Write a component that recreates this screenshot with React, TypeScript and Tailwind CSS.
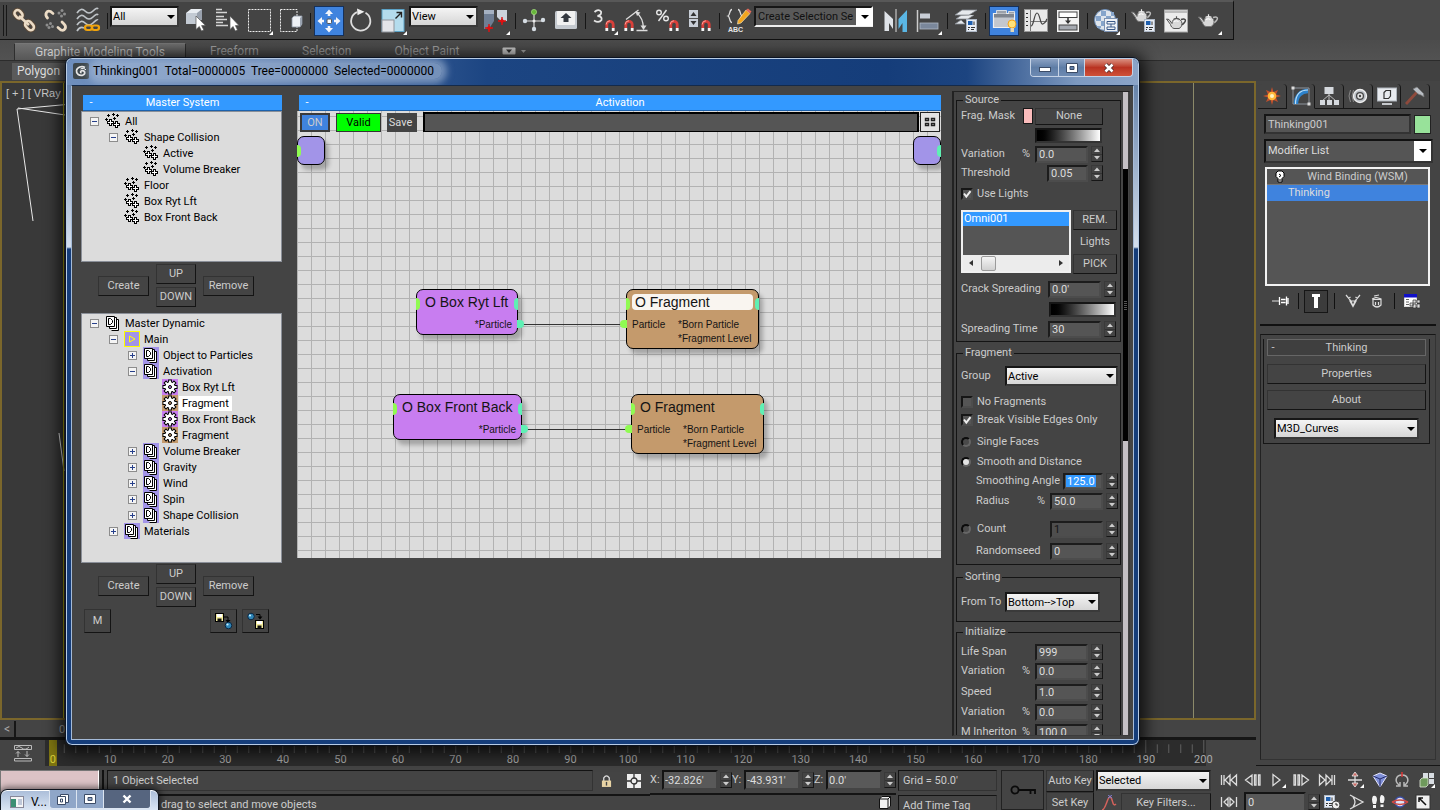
import { useId } from "react";
import type { ReactNode } from "react";

/* ---------- shared controls ---------- */

const fieldBase =
  "h-[17px] min-w-0 border-2 border-t-[#1c1c1c] border-l-[#1c1c1c] border-r-[#4c4c4c] border-b-[#4c4c4c] pl-[2px] text-[11px] leading-none outline-none";

function Spinner() {
  return (
    <span className="flex h-[16px] w-[12px] shrink-0 flex-col border border-[#3a3a3a] border-r-[#161616] border-b-[#161616]">
      <button type="button" aria-label="Increase" className="flex flex-1 items-center justify-center">
        <svg viewBox="0 0 6 4" className="h-[4px] w-[6px]"><path d="M0 4L3 0.5L6 4Z" fill="#ccc" /></svg>
      </button>
      <button type="button" aria-label="Decrease" className="flex flex-1 items-center justify-center border-t border-[#333]">
        <svg viewBox="0 0 6 4" className="h-[4px] w-[6px]"><path d="M0 0L3 3.5L6 0Z" fill="#ccc" /></svg>
      </button>
    </span>
  );
}

function NumberRow({
  label, unit, value, height, width = "w-[53px]", pad = "pr-[17px]", indent = "", tone = "bg-[#555] text-[#ddd]",
}: {
  label: string; unit?: string; value: string; height: string; width?: string; pad?: string; indent?: string; tone?: string;
}) {
  const id = useId();
  return (
    <div className={`flex shrink-0 items-center gap-[3px] ${height} ${pad} ${indent}`}>
      <label htmlFor={id} className="mr-auto whitespace-nowrap">{label}</label>
      {unit && <span className="mr-[2px]">{unit}</span>}
      <input id={id} defaultValue={value} className={`${fieldBase} ${width} ${tone}`} />
      <Spinner />
    </div>
  );
}

function Check({ label, checked, height }: { label: string; checked?: boolean; height: string }) {
  return (
    <label className={`flex items-center gap-[4px] ${height}`}>
      <span className="relative h-[12px] w-[12px] shrink-0">
        <input
          type="checkbox"
          defaultChecked={checked}
          className="peer block h-[12px] w-[12px] appearance-none border-2 border-t-[#161616] border-l-[#161616] border-r-[#4d4d4d] border-b-[#4d4d4d] bg-[#555]"
        />
        <svg viewBox="0 0 12 12" className="pointer-events-none absolute inset-0 hidden peer-checked:block">
          <path d="M3 5.5L5.3 8.5L9.5 3.2" stroke="#eee" strokeWidth="2" fill="none" />
        </svg>
      </span>
      <span className="whitespace-nowrap">{label}</span>
    </label>
  );
}

function Radio({ label, checked }: { label: string; checked?: boolean }) {
  return (
    <label className="flex items-center gap-[6px]">
      <input
        type="radio"
        name="split-mode"
        defaultChecked={checked}
        className="block h-[10px] w-[10px] shrink-0 appearance-none rounded-full border-2 border-t-[#0c0c0c] border-l-[#0c0c0c] border-r-[#666] border-b-[#666] bg-[#4a4a4a] checked:bg-[#e4e4e4]"
      />
      <span className="whitespace-nowrap">{label}</span>
    </label>
  );
}

function Group({ title, className, children }: { title: string; className?: string; children: ReactNode }) {
  return (
    <fieldset className={`min-w-0 shrink-0 border border-[#141414] pl-[4px] ${className ?? ""}`}>
      <legend className="ml-[2px] h-[12px] px-[2px] leading-[12px]">{title}</legend>
      <div className="flex flex-col">{children}</div>
    </fieldset>
  );
}

function Combo({ label, value, className, tone = "bg-gradient-to-b from-[#f4f4f4] to-[#d6d6d6] text-black" }: {
  label: string; value: string; className: string; tone?: string;
}) {
  return (
    <span className={`relative block shrink-0 ${className}`}>
      <select
        aria-label={label}
        className={`block h-full w-full appearance-none border-2 border-t-[#161616] border-l-[#161616] border-r-[#3a3a3a] border-b-[#3a3a3a] pl-px text-[11px] leading-none outline-none ${tone}`}
      >
        <option>{value}</option>
      </select>
      <svg viewBox="0 0 8 4" className="pointer-events-none absolute top-1/2 right-[4px] -mt-[2px] h-[4px] w-[8px]">
        <path d="M0 0H8L4 4Z" fill="#000" />
      </svg>
    </span>
  );
}

function PushButton({ className, children, label }: { className: string; children: ReactNode; label?: string }) {
  return (
    <button
      type="button"
      aria-label={label}
      className={`flex shrink-0 items-center justify-center border border-t-[#333] border-l-[#333] border-r-[#141414] border-b-[#141414] bg-[#444] text-[#ccc] ${className}`}
    >
      {children}
    </button>
  );
}

/* ---------- main toolbar ---------- */

function Tool({ label, children, active, flyout }: { label: string; children: ReactNode; active?: boolean; flyout?: boolean }) {
  return (
    <button type="button" aria-label={label} className="flex h-[32px] w-[32px] shrink-0 items-center justify-center">
      <svg viewBox="0 0 32 32" className="h-[32px] w-[32px]" fill="none">
        {active && <rect x="1.5" y="1.5" width="29" height="29" fill="#3f83de" stroke="#15315c" />}
        {children}
        {flyout && <path d="M30 26V30H26Z" fill="#fff" />}
      </svg>
    </button>
  );
}

function Sep() {
  return (
    <span className="flex w-[6px] shrink-0 justify-center">
      <span className="h-[16px] w-px bg-[#161616]" />
    </span>
  );
}

function Magnet({ x, y }: { x: number; y: number }) {
  return (
    <g transform={`translate(${x} ${y})`}>
      <path d="M1.8 8V4.5A3.2 3.2 0 0 1 8.2 4.5V8" stroke="#d8403a" strokeWidth="2.8" />
      <path d="M1.2 4.5A3.8 3.8 0 0 1 5 0.800" stroke="#ffa198" strokeWidth="1" />
      <path d="M1.8 8V11M8.2 8V11" stroke="#f4f4f4" strokeWidth="2.8" />
    </g>
  );
}

function Teapot({ x = 0, y = 0, stroke = "none" }: { x?: number; y?: number; stroke?: string }) {
  return (
    <g transform={`translate(${x} ${y})`}>
      <path d="M15 4.5C19 3 20.5 5 18.5 7.5C17.5 9 16 9.8 14.5 10" stroke={stroke === "none" ? "#bbb" : "#444"} strokeWidth="1.4" />
      <path d="M0.5 4L3 4.5L6 8.5C6 5.5 8 3.5 10.5 3.5S16 5.5 16 8.5C16 11 14.5 13 13 13.5H8C6 13 5 11.5 4.5 9.5Z" fill="#d8d8d8" stroke={stroke === "none" ? "#777" : stroke} strokeWidth="1" />
      <path d="M7.5 4.2Q10.5 2.8 13.5 4.2M10.5 3V1.2" stroke={stroke === "none" ? "#eee" : stroke} strokeWidth="1.2" />
      <path d="M8 6.5Q10 5 12.5 6.5" stroke="#fff" />
    </g>
  );
}

function Dialog({ x, y }: { x: number; y: number }) {
  return (
    <g transform={`translate(${x} ${y})`}>
      <rect x="0.5" y="0.5" width="10" height="12" fill="#e8edf4" stroke="#aeb8c6" />
      <rect x="2" y="2" width="4.5" height="4" fill="#1e5fae" />
      <path d="M8 2.5V6M2 8.5H4M5 8.5H9M2 10.5H3M5 10.5H8" stroke="#333" />
    </g>
  );
}

function MainToolbar() {
  return (
    <div className="flex h-[40px] shrink-0 bg-[#4a4a4a]">
      <div role="toolbar" aria-label="Main toolbar" className="flex h-[40px] items-center border-t-2 border-r border-b border-t-[#585858] border-r-[#111] border-b-[#111] bg-[#444]">
        <span className="mr-[1px] ml-[3px] h-[31px] w-[4px] border-x border-[#181818]" />
        <Tool label="Select and link">
          <g stroke="#5b4a3a" strokeWidth="4.6"><rect x="6" y="6" width="9" height="6.4" rx="3.2" transform="rotate(48 10.5 9.2)" /><rect x="16.5" y="17.5" width="10" height="6.4" rx="3.2" transform="rotate(48 21.5 20.7)" /></g>
          <g stroke="#ecdcc6" strokeWidth="2.6"><rect x="6" y="6" width="9" height="6.4" rx="3.2" transform="rotate(48 10.5 9.2)" /><rect x="16.5" y="17.5" width="10" height="6.4" rx="3.2" transform="rotate(48 21.5 20.7)" /><path d="M11 11L21 20" /></g>
        </Tool>
        <Tool label="Unlink selection">
          <g stroke="#ecdcc6" strokeWidth="2.8" strokeLinecap="round"><path d="M7.5 13C4 9 7 5 10.5 6.5L13 8.5" /><path d="M18 22.5L21 25C25 26.5 27 22 24 19L22 17" /></g>
          <g fill="#8d8d8d"><circle cx="19" cy="8" r="1.5" /><circle cx="22" cy="5.500" r="1.500" /><circle cx="24.5" cy="9" r="1.5" /><circle cx="21.500" cy="11" r="1.500" /><circle cx="7" cy="20" r="1.5" /><circle cx="10.500" cy="18.5" r="1.500" /><circle cx="9" cy="22.5" r="1.5" /><circle cx="12.500" cy="21.500" r="1.500" /></g>
        </Tool>
        <Tool label="Bind to space warp">
          <g stroke="#bfc4c8" strokeWidth="1.7"><path d="M5 8Q9 2 13 6T21 6T26 4" /><path d="M5 14Q9 8 13 12T21 12T26 10" /><path d="M5 20Q9 14 13 18T21 18T26 15" /><path d="M5 26Q8 21 12 23" /></g>
          <g stroke="#f0a30c" strokeWidth="2.2"><rect x="13" y="20.500" width="7" height="4.500" rx="2.2" /><rect x="20" y="20.500" width="7" height="4.500" rx="2.2" /></g>
        </Tool>
        <Sep />
        <Combo label="Selection filter" value="All" className="mb-[8px] h-[21px] w-[69px]" />
        <Tool label="Select object">
          <path d="M7 8L12 4H23V14L19 19H7Z" fill="#e9edf2" /><path d="M7 8H18V19H7Z" fill="#c3cad3" /><path d="M18 8L23 4V14L18 19Z" fill="#99a1ad" />
          <path d="M17 11V24.500L20.300 21.500L22.500 26L24.800 25L22.600 20.600H26.500Z" fill="#fff" stroke="#555" strokeWidth="0.7" />
        </Tool>
        <Tool label="Select by name">
          <path d="M5 4.500H11M5 7.500H16M5 11.500H13M5 14.500H16M5 17.500H12M5 20.500H17" stroke="#d5d5d5" strokeWidth="1.3" />
          <path d="M19 11V24.500L22 21.500L24.300 26L26.500 25L24.400 20.600H28Z" fill="#fff" stroke="#555" strokeWidth="0.7" />
        </Tool>
        <Tool label="Rectangular selection region" flyout>
          <rect x="5.500" y="4.500" width="22" height="22" stroke="#eee" strokeDasharray="2 1" />
        </Tool>
        <Tool label="Window crossing">
          <path d="M5.500 4.500H22V11M5.500 4.500V26.500H22V22" stroke="#eee" strokeDasharray="2 1" />
          <path d="M17 13L19 11H27V19L25 22H17Z" fill="#eef1f5" stroke="#8c95a2" strokeWidth="0.8" /><path d="M25 13L27 11V19L25 22Z" fill="#9aa3b0" />
        </Tool>
        <Sep />
        <Tool label="Select and move" active>
          <g fill="#f2f5fb"><path d="M16 4.500L20 9H17.300V11H14.700V9H12Z" /><path d="M16 27.500L20 23H17.300V21H14.700V23H12Z" /><path d="M4.500 16L9 12V14.700H11V17.300H9V20Z" /><path d="M27.500 16L23 12V14.700H21V17.300H23V20Z" /></g>
          <rect x="14" y="14" width="4.500" height="4.500" rx="1" fill="#fff" stroke="#555" />
        </Tool>
        <Tool label="Select and rotate">
          <path d="M20.500 7.700A9.600 9.600 0 1 1 12 7.200" stroke="#ddd" strokeWidth="1.8" /><path d="M12 3.500L19.500 6.800L12.500 10.200Z" fill="#eee" />
        </Tool>
        <Tool label="Select and scale" flyout>
          <rect x="5" y="4.500" width="22" height="22" fill="#b4dced" stroke="#5ba2c6" /><rect x="5" y="15" width="12" height="12" fill="#e3e5ea" stroke="#8f949c" />
          <path d="M18.500 13.500L24 8M19.500 7.500H24.500V12.500" stroke="#222" strokeWidth="1.4" />
        </Tool>
        <Combo label="Reference coordinate system" value="View" className="mb-[8px] h-[21px] w-[69px]" />
        <span className="w-[2px] shrink-0" />
        <Tool label="Use pivot point center" flyout>
          <path d="M4 5H14V16L9 24H4Z" fill="#6f7e94" /><path d="M4 5H14V9H4Z" fill="#a5b1c2" /><path d="M17 5H27V16H21L17 12Z" fill="#ccd3dc" /><path d="M9 19V27M5 23H13M22 12V20M18 16H26" stroke="#e01010" strokeWidth="1.400" /><path d="M9 20.500L11.500 23L9 25.500L6.500 23ZM22 13.500L24.500 16L22 18.500L19.500 16Z" fill="#e01010" />
        </Tool>
        <Sep />
        <Tool label="Select and manipulate">
          <path d="M16 7V25M6 16H26" stroke="#ddd" strokeWidth="1.2" /><circle cx="16" cy="7" r="2.600" fill="#67b53a" stroke="#a4e07e" strokeWidth="0.7" /><circle cx="7" cy="16" r="2.200" fill="#d6dde4" /><circle cx="25" cy="15" r="2.200" fill="#d6dde4" /><circle cx="16" cy="24" r="2.200" fill="#d6dde4" /><circle cx="16" cy="16" r="1.500" fill="#eee" />
        </Tool>
        <Tool label="Keyboard shortcut override">
          <rect x="5" y="6" width="22" height="18" rx="1.500" fill="#c4c9cf" /><rect x="7" y="6" width="18" height="14" rx="1" fill="#f1f1f1" /><path d="M16 8L21.500 13H18.500V17H13.500V13H10.500Z" fill="#33383f" />
        </Tool>
        <Sep />
        <Tool label="Snaps toggle" flyout>
          <path d="M6.500 7Q10.500 3.500 13 6.500Q14 10 9.500 11Q14.500 11.500 13.500 15Q11 18.500 6 15.500" stroke="#e6e6e6" strokeWidth="1.800" /><Magnet x={17} y={15} />
        </Tool>
        <Tool label="Angle snap">
          <path d="M6 14.500L18.500 5M16.500 25.500H27.500M17 8Q23 13 23.500 23" stroke="#ddd" strokeWidth="1.300" /><path d="M15.500 6.500L20.500 7.500L17 11ZM20.500 20.500H26.500L23.500 25Z" fill="#ddd" /><Magnet x={4} y={15} />
        </Tool>
        <Tool label="Percent snap">
          <g stroke="#e6e6e6" strokeWidth="1.400"><circle cx="7" cy="7.500" r="2.300" /><circle cx="14" cy="13.500" r="2.300" /><path d="M14.500 5L6.500 16" /></g><Magnet x={17} y={15} />
        </Tool>
        <Tool label="Spinner snap">
          <rect x="5" y="5" width="9" height="17" fill="#c9cfd8" /><path d="M5 13.500H14" stroke="#555" /><path d="M6.500 11L9.500 7L12.500 11ZM6.500 16L9.500 20L12.500 16Z" fill="#333" /><Magnet x={17} y={15} />
        </Tool>
        <Sep />
        <Tool label="Edit named selection sets">
          <path d="M10 4.500C7 4.500 8.500 10 6 11C8.500 12 7 17.500 10 17.500M16 4.500C19 4.500 17.500 10 20 11C17.500 12 19 17.500 16 17.500" stroke="#ddd" strokeWidth="1.300" />
          <path d="M24 5L28 8.500L19 18L15.500 19L16 15.500Z" fill="#f2a51f" stroke="#fff0c8" strokeWidth="0.600" /><path d="M24 5L26 3.500L29.500 6.500L28 8.500Z" fill="#e46a5a" />
          <text x="6" y="27" fontSize="7" fill="#e6e6e6" fontFamily="Liberation Sans" fontWeight="700">ABC</text>
        </Tool>
        <span className="relative mb-[8px] block h-[21px] w-[119px] shrink-0">
          <input aria-label="Named selection sets" defaultValue="Create Selection Se" className="block h-full w-full border-2 border-t-[#161616] border-l-[#161616] border-r-[#eee] border-b-[#eee] bg-[#595959] pr-[16px] pl-[2px] text-[11px] text-[#111] outline-none" />
          <button type="button" aria-label="Open selection sets" className="absolute top-[2px] right-0 flex h-[18px] w-[17px] items-center justify-center bg-white">
            <svg viewBox="0 0 8 4" className="h-[4px] w-[8px]"><path d="M0 0H8L4 4Z" fill="#000" /></svg>
          </button>
        </span>
        <span className="w-[7px] shrink-0" />
        <Tool label="Mirror">
          <path d="M4.500 6L13 14V24L9 18V26H4.500Z" fill="#dfe3e8" /><path d="M16 4V27" stroke="#ddd" /><path d="M27 5L18.500 14V24L22.500 18V27H27Z" fill="#5ab6e4" />
        </Tool>
        <Tool label="Align" flyout>
          <path d="M5.500 5V27" stroke="#ccc" strokeWidth="1.500" /><rect x="8" y="8.500" width="10" height="5" fill="#c9ced6" /><rect x="8" y="18" width="18" height="6" fill="#7a879b" stroke="#aeb7c4" strokeWidth="0.800" />
        </Tool>
        <Sep />
        <Tool label="Layers">
          <path d="M12 5H27L19 10H5ZM11 10.500L6 14H18L24 10M11 15L5 19H15" fill="#e6e9ed" stroke="#858b93" strokeWidth="0.800" /><Dialog x={16} y={14} />
        </Tool>
        <Sep />
        <Tool label="Graphite tools" active>
          <path d="M5.500 8.500V22.500H26.500V8.500Z" fill="#c3c7ce" stroke="#f0f0f0" strokeWidth="1.200" /><path d="M8.500 5.500H18.500V9H8.500ZM20.500 6.500H26.500V9H20.500Z" fill="#9ba1aa" stroke="#eee" strokeWidth="0.800" /><rect x="6" y="9" width="20" height="3.500" fill="#7f858e" /><circle cx="24" cy="19" r="4" fill="#ffe27a" stroke="#f3a21a" /><rect x="22.500" y="23" width="3.500" height="4" fill="#e4d8b4" />
        </Tool>
        <Tool label="Curve editor">
          <rect x="4.500" y="4.500" width="23" height="22" fill="#e9e9e9" stroke="#9a9a9a" /><path d="M10.500 5V26M10 16.500H27" stroke="#777" /><path d="M6 8.500H8M6 12.500H8M6 16.500H8M6 20.500H8" stroke="#333" /><path d="M11 21C14 21 14 8 17 8S20 20 23 19S26 15 27 14" stroke="#444" strokeWidth="1.200" />
        </Tool>
        <Tool label="Schematic view">
          <rect x="5" y="5" width="22" height="22" fill="#f2f2f2" /><rect x="7" y="7" width="18" height="5.500" fill="#fff" stroke="#444" /><rect x="7" y="20" width="18" height="5" fill="#a5a9b0" stroke="#444" /><path d="M16 12.500V17" stroke="#333" strokeWidth="1.500" /><path d="M13 15.500H19L16 19Z" fill="#333" />
        </Tool>
        <Sep />
        <Tool label="Material editor" flyout>
          <circle cx="15" cy="15" r="10.500" fill="#dfe5ec" stroke="#6d8eb8" /><path d="M6 11H11V16H6ZM11 6H16V11H11ZM16 11H21V16H16ZM11 16H16V21H11ZM21 7H24V11H21ZM7 21H11V23H7Z" fill="#86a5cb" />
          <rect x="14.500" y="13.500" width="13" height="13" fill="#eef2f7" stroke="#7d93b3" /><path d="M17 16.500H25V19H17ZM17 22H25V24.500H17ZM21 19V22" stroke="#3a5a8a" />
        </Tool>
        <Sep />
        <Tool label="Render setup"><Teapot x={3} y={3} /><Dialog x={16} y={14} /></Tool>
        <Tool label="Rendered frame window">
          <rect x="4.500" y="5" width="23" height="22" fill="#ececec" stroke="#aaa" /><path d="M5 7H27" stroke="#bbb" strokeWidth="2" /><Teapot x={6} y={10} stroke="#555" />
        </Tool>
        <Tool label="Render production" flyout><Teapot x={6} y={8} /></Tool>
        <span className="w-[9px] shrink-0" />
      </div>
    </div>
  );
}

/* ---------- ribbon ---------- */

function Ribbon() {
  return (
    <div className="flex h-[41px] shrink-0 flex-col bg-gradient-to-b from-[#4c4c4c] to-[#585858] text-[12px]">
      <div className="flex h-[20px] items-end gap-[24px] pl-[14px] text-[#a4a4a4]">
        <button type="button" className="h-[17px] w-[172px] border border-b-0 border-[#2e2e2e] border-t-[#777] bg-gradient-to-b from-[#717171] to-[#575757] leading-[15px] text-[#ccc]">Graphite Modeling Tools</button>
        <button type="button" className="h-[17px] w-[48px] leading-[17px] whitespace-nowrap">Freeform</button>
        <button type="button" className="ml-[20px] h-[17px] w-[48px] leading-[17px] whitespace-nowrap">Selection</button>
        <button type="button" className="ml-[20px] h-[17px] w-[66px] leading-[17px] whitespace-nowrap">Object Paint</button>
        <button type="button" aria-label="Ribbon options" className="mb-[5px] ml-[18px] flex h-[8px] items-center gap-[4px]">
          <svg viewBox="0 0 24 8" className="h-[8px] w-[24px]"><rect x="0.500" y="0.500" width="13" height="7" rx="1" fill="#d0d0d0" /><path d="M4 2.500H10L7 6Z" fill="#333" /><path d="M19 3H24L21.500 6Z" fill="#aaa" /></svg>
        </button>
      </div>
      <div className="flex flex-1 items-center border-t border-[#2c2c2c] bg-[#414141] pl-[12px] text-[#ddd]">
        <span className="h-[17px] w-[54px] bg-[#5a5a5a] pl-[5px] leading-[17px]">Polygon</span>
      </div>
    </div>
  );
}

/* ---------- trees ---------- */

function SparkIcon() {
  return (
    <svg viewBox="0 0 16 16" className="h-[16px] w-[16px]" shapeRendering="crispEdges">
      <path d="M3.500 1V4M2 2.500H5M8.500 0V3M7 1.500H10M12.500 1V4M11 2.500H14M1.500 5V8M0 6.500H3M9.500 4V7M8 5.500H11" stroke="#000" fill="none" />
      <path d="M4.500 6.500H6.500V8.500H8.500V10.500H6.500V12.500H4.500V10.500H2.500V8.500H4.500Z" fill="#fff" stroke="#000" />
      <path d="M10.500 8.500H12.500V10.500H14.500V12.500H12.500V14.500H10.500V12.500H8.500V10.500H10.500Z" fill="#fff" stroke="#000" />
    </svg>
  );
}

function DynIcon({ bg }: { bg: string }) {
  return (
    <svg viewBox="0 0 16 16" className="h-[16px] w-[16px]">
      <rect width="16" height="16" fill={bg} />
      <path d="M5.500 4.500H13.500V15.500H6.500" fill="#fff" stroke="#000" /><path d="M4.500 2.500H11.500V13.500H4.500Z" fill="#fff" stroke="#000" />
      <path d="M1.500 1.500H9.500V11.500H1.500Z" fill="#fff" stroke="#000" />
      <path d="M3.500 3.500H5.500L7.500 5.500V7.500L5.500 9.500H3.500Z" fill="none" stroke="#000" />
    </svg>
  );
}

function GearIcon({ bg }: { bg: string }) {
  return (
    <svg viewBox="0 0 16 16" className="h-[16px] w-[16px]">
      <rect width="16" height="16" fill={bg} />
      <path d="M8 0.500V15.500M0.500 8H15.500M2.700 2.700L13.300 13.300M13.300 2.700L2.700 13.300" stroke="#000" strokeWidth="3.800" />
      <circle cx="8" cy="8" r="5.600" fill="#000" />
      <path d="M8 1.400V14.600M1.400 8H14.600M3.400 3.400L12.600 12.600M12.600 3.400L3.400 12.600" stroke="#fff" strokeWidth="1.900" />
      <circle cx="8" cy="8" r="4.700" fill="#fff" />
      <circle cx="8" cy="8" r="1.500" fill={bg} stroke="#000" />
    </svg>
  );
}

function PlayIcon() {
  return (
    <svg viewBox="0 0 16 16" className="h-[16px] w-[16px]"><rect x="0.500" y="0.500" width="15" height="15" fill="#a294e8" stroke="#ff0" /><path d="M5.500 5V11L11 8Z" fill="none" stroke="#ff0" /></svg>
  );
}

function Expander({ state }: { state?: "open" | "closed" }) {
  if (!state) return <span className="w-[9px] shrink-0" />;
  return (
    <button type="button" aria-label={state === "open" ? "Collapse" : "Expand"} className="h-[9px] w-[9px] shrink-0">
      <svg viewBox="0 0 9 9" className="h-[9px] w-[9px]">
        <rect x="0.500" y="0.500" width="8" height="8" fill="#f4f4f4" stroke="#8c8c8c" />
        <path d={state === "open" ? "M2 4.500H7" : "M2 4.500H7M4.500 2V7"} stroke="#27408b" />
      </svg>
    </button>
  );
}

type Node = { level: number; text: string; state?: "open" | "closed"; icon: ReactNode; selected?: boolean };
const levelPad = ["pl-[8px]", "pl-[27px]", "pl-[46px]", "pl-[65px]"];

const spark = <SparkIcon />;
const dyn = <DynIcon bg="#a294e8" />;

const systemTree: Node[] = [
  { level: 0, text: "All", state: "open", icon: spark },
  { level: 1, text: "Shape Collision", state: "open", icon: spark },
  { level: 2, text: "Active", icon: spark },
  { level: 2, text: "Volume Breaker", icon: spark },
  { level: 1, text: "Floor", icon: spark },
  { level: 1, text: "Box Ryt Lft", icon: spark },
  { level: 1, text: "Box Front Back", icon: spark },
];

const dynamicTree: Node[] = [
  { level: 0, text: "Master Dynamic", state: "open", icon: <DynIcon bg="#dcdcdc" /> },
  { level: 1, text: "Main", state: "open", icon: <PlayIcon /> },
  { level: 2, text: "Object to Particles", state: "closed", icon: dyn },
  { level: 2, text: "Activation", state: "open", icon: dyn },
  { level: 3, text: "Box Ryt Lft", icon: <GearIcon bg="#c87df0" /> },
  { level: 3, text: "Fragment", icon: <GearIcon bg="#c49a6c" />, selected: true },
  { level: 3, text: "Box Front Back", icon: <GearIcon bg="#c87df0" /> },
  { level: 3, text: "Fragment", icon: <GearIcon bg="#c49a6c" /> },
  { level: 2, text: "Volume Breaker", state: "closed", icon: dyn },
  { level: 2, text: "Gravity", state: "closed", icon: dyn },
  { level: 2, text: "Wind", state: "closed", icon: dyn },
  { level: 2, text: "Spin", state: "closed", icon: dyn },
  { level: 2, text: "Shape Collision", state: "closed", icon: dyn },
  { level: 1, text: "Materials", state: "closed", icon: dyn },
];

function Tree({ nodes, className }: { nodes: Node[]; className: string }) {
  return (
    <ul className={`shrink-0 border border-[#8a8f98] bg-[#dcdcdc] pt-px text-black ${className}`}>
      {nodes.map((n, i) => (
        <li key={i} className={`flex h-[16px] items-center ${levelPad[n.level]}`}>
          <Expander state={n.state} />
          <span className="ml-[6px] flex">{n.icon}</span>
          <span className={`ml-px px-[3px] leading-[15px] whitespace-nowrap ${n.selected ? "bg-white" : ""}`}>{n.text}</span>
        </li>
      ))}
    </ul>
  );
}

function TreeButtons() {
  return (
    <div className="flex shrink-0 items-center gap-[7px] pl-[17px]">
      <PushButton className="h-[20px] w-[51px]">Create</PushButton>
      <div className="flex flex-col gap-[3px]">
        <PushButton className="h-[20px] w-[40px]">UP</PushButton>
        <PushButton className="h-[20px] w-[40px]">DOWN</PushButton>
      </div>
      <PushButton className="h-[20px] w-[51px]">Remove</PushButton>
    </div>
  );
}

function Header({ text, className = "" }: { text: string; className?: string }) {
  return (
    <div className={`grid h-[16px] shrink-0 grid-cols-[16px_1fr_16px] items-center border-b border-[#1c62ad] bg-[#3399ff] text-center leading-[15px] text-white ${className}`}>
      <button type="button" aria-label={`Collapse ${text}`}>-</button>
      <span>{text}</span>
    </div>
  );
}

function Floppy({ x, y }: { x: number; y: number }) {
  return (
    <g transform={`translate(${x} ${y})`}>
      <rect x="0.500" y="0.500" width="8" height="8" fill="#f2ea9a" stroke="#000" /><rect x="2" y="1" width="5" height="3" fill="#fff" /><rect x="2.500" y="5.500" width="4" height="3" fill="#111" />
    </g>
  );
}

function LeftColumn() {
  return (
    <div className="flex w-[201px] shrink-0 flex-col">
      <Header text="Master System" className="ml-[2px]" />
      <Tree nodes={systemTree} className="h-[151px]" />
      <div className="h-[2px] shrink-0" />
      <TreeButtons />
      <div className="h-[6px] shrink-0" />
      <Tree nodes={dynamicTree} className="h-[250px]" />
      <div className="h-px shrink-0" />
      <TreeButtons />
      <div className="mt-[2px] flex gap-[5px] pl-[3px]">
        <PushButton className="mr-auto h-[24px] w-[27px]">M</PushButton>
        <PushButton className="h-[24px] w-[27px]" label="Save to scene">
          <svg viewBox="0 0 20 18" className="h-[18px] w-[20px]" fill="none"><Floppy x={1} y={1} /><path d="M10 5H14V9" stroke="#000" /><path d="M11.500 8H16.500L14 11Z" fill="#000" /><circle cx="14.500" cy="13.500" r="3.300" fill="#2f86b8" stroke="#0b2540" /><circle cx="13.500" cy="12.500" r="1.100" fill="#c6f0ff" /></svg>
        </PushButton>
        <PushButton className="mr-[13px] h-[24px] w-[27px]" label="Save to file">
          <svg viewBox="0 0 20 18" className="h-[18px] w-[20px]" fill="none"><circle cx="5" cy="4.500" r="3.300" fill="#2f86b8" stroke="#0b2540" /><circle cx="4" cy="3.500" r="1.100" fill="#c6f0ff" /><path d="M10 2.500H14V5" stroke="#000" /><path d="M11.500 4.500H16.500L14 7.500Z" fill="#000" /><Floppy x={9} y={8} /></svg>
        </PushButton>
      </div>
    </div>
  );
}

/* ---------- node canvas ---------- */

const shadow = "shadow-[4px_5px_4px_rgba(0,0,0,0.25)]";
const portIn = "absolute -left-px top-[8px] h-[12px] w-[4px] rounded-r-full bg-[#90fb52]";
const portOut = "absolute -right-px top-[8px] h-[12px] w-[4px] rounded-l-full bg-[#5ff0b4]";

function BoxNode({ title, place }: { title: string; place: string }) {
  return (
    <div className={`absolute h-[46px] rounded-[7px] border border-black bg-[#c87df0] ${shadow} ${place}`}>
      <i className={portIn} /><i className={portOut} />
      <div className="mt-[4px] pl-[8px] text-[14px] leading-[16px] whitespace-nowrap">{title}</div>
      <div className="mt-[9px] pr-[5px] text-right text-[10px] leading-[12px]">*Particle</div>
      <i className="absolute top-[30px] -right-[7px] h-[8px] w-[7px] rounded-r-full bg-[#5ff0b4]" />
    </div>
  );
}

function FragmentNode({ place, selected }: { place: string; selected?: boolean }) {
  return (
    <div className={`absolute h-[60px] w-[133px] rounded-[7px] border border-black bg-[#c49a6c] ${shadow} ${place}`}>
      <i className={portIn} /><i className={portOut} />
      <div className={`mx-[5px] mt-[4px] rounded-[4px] pl-[3px] text-[14px] leading-[16px] ${selected ? "bg-white/90" : ""}`}>O Fragment</div>
      <div className="mt-[9px] grid grid-cols-[46px_1fr] pl-[5px] text-[10px] leading-[14px]">
        <span className="leading-[12px]">Particle</span>
        <span className="-mt-px whitespace-nowrap">*Born Particle<br />*Fragment Level</span>
      </div>
      <i className="absolute top-[30px] -left-[7px] h-[8px] w-[7px] rounded-l-full bg-[#90fb52]" />
    </div>
  );
}

function Canvas() {
  return (
    <div className="flex min-w-0 flex-1 flex-col">
      <Header text="Activation" className="ml-[2px]" />
      <div className="relative h-[447px] shrink-0 overflow-hidden bg-[#dcdcdc] bg-[linear-gradient(to_right,#b2b2b2_1px,transparent_1px),linear-gradient(to_bottom,#b2b2b2_1px,transparent_1px)] bg-[length:14px_14px] bg-[position:0px_5px]">
        <div className="flex h-[21px] items-end gap-[6px] pr-px pl-[3px]">
          <button type="button" className="h-[19px] w-[30px] border-2 border-[#3a3a3a] bg-[#3f83de] leading-[16px] text-[#ccc]">ON</button>
          <button type="button" className="h-[19px] w-[45px] border border-[#333] bg-[#00ff00] leading-[16px] text-black">Valid</button>
          <button type="button" className="h-[19px] w-[30px] bg-[#444] pr-[3px] leading-[16px] text-[#ddd]">Save</button>
          <input aria-label="Expression" className="h-[20px] min-w-0 flex-1 border-2 border-b border-black bg-[#555]" />
          <button type="button" aria-label="Arrange nodes" className="-ml-[5px] flex h-[20px] w-[20px] items-center justify-center border border-[#222] bg-[#e2e2e2]">
            <svg viewBox="0 0 14 12" className="h-[12px] w-[14px]" fill="none" stroke="#222" strokeWidth="1.400"><path d="M2.500 2.500H5.500V4.500H2.500ZM8.500 2.500H11.500V4.500H8.500ZM2.500 7.500H5.500V9.500H2.500ZM8.500 7.500H11.500V9.500H8.500Z" /></svg>
          </button>
        </div>
        <div className={`absolute top-[25px] left-0 h-[29px] w-[28px] rounded-[7px] border border-black bg-[#a294e8] ${shadow}`}><i className={portIn} /></div>
        <div className={`absolute top-[25px] right-0 h-[29px] w-[28px] rounded-[7px] border border-black bg-[#a294e8] ${shadow}`}><i className={portOut} /></div>
        <div className="font-['Liberation_Sans',sans-serif] text-[#141414]">
          <i className="absolute top-[213px] left-[221px] h-px w-[110px] bg-[#333]" />
          <i className="absolute top-[318px] left-[225px] h-px w-[110px] bg-[#333]" />
          <BoxNode title="O Box Ryt Lft" place="left-[119px] top-[178px] w-[102px]" />
          <FragmentNode place="left-[329px] top-[178px]" selected />
          <BoxNode title="O Box Front Back" place="left-[96px] top-[283px] w-[129px]" />
          <FragmentNode place="left-[334px] top-[283px]" />
        </div>
      </div>
    </div>
  );
}

/* ---------- parameter rollout ---------- */

function Gradient({ pad, height }: { pad: string; height: string }) {
  return (
    <div className={`flex items-center justify-end ${height} ${pad}`}>
      <div className="h-[15px] w-[67px] border-2 border-t-[#161616] border-l-[#161616] border-r-[#333] border-b-[#333] bg-gradient-to-r from-black to-white" />
    </div>
  );
}

function Params() {
  return (
    <div className="flex h-[645px] w-[178px] shrink-0 gap-[2px] overflow-hidden border border-l-2 border-[#222] border-r-[#3c3c3c] border-b-[#3c3c3c] pr-px pl-[2px] text-[#ccc]">
      <div className="flex min-w-0 flex-1 flex-col overflow-hidden pt-[2px]">
        <Group title="Source">
          <div className="flex h-[20px] items-center pr-[17px]">
            <span className="mr-auto">Frag. Mask</span>
            <button type="button" aria-label="Mask colour" className="h-[16px] w-[10px] border border-[#181818] bg-[#fbbcbc]" />
            <PushButton className="ml-[2px] h-[17px] w-[68px]">None</PushButton>
          </div>
          <Gradient pad="pr-[18px]" height="h-[18px]" />
          <NumberRow label="Variation" unit="%" value="0.0" height="h-[20px]" />
          <NumberRow label="Threshold" value="0.05" height="h-[18px]" width="w-[41px]" />
          <Check label="Use Lights" checked height="h-[24px]" />
          <div className="mt-[4px] flex gap-[2px]">
            <div className="flex h-[63px] w-[110px] flex-col border-2 border-[#f0f0f0] bg-[#555]">
              <div className="h-[14px] shrink-0 bg-[#3399ff] pl-px leading-[14px] text-white">Omni001</div>
              <div className="mt-auto flex h-[16px] items-center justify-between bg-[#ececec] px-[6px]">
                <svg viewBox="0 0 4 6" className="h-[6px] w-[4px]"><path d="M4 0V6L0 3Z" fill="#333" /></svg>
                <span className="mr-auto ml-[8px] h-[15px] w-[15px] rounded-[2px] border border-[#9a9a9a] bg-gradient-to-b from-[#f5f5f5] to-[#d0d0d0]" />
                <svg viewBox="0 0 4 6" className="h-[6px] w-[4px]"><path d="M0 0V6L4 3Z" fill="#333" /></svg>
              </div>
            </div>
            <div className="flex h-[64px] flex-col items-center justify-between">
              <PushButton className="h-[20px] w-[44px]">REM.</PushButton>
              <span>Lights</span>
              <PushButton className="h-[20px] w-[44px]">PICK</PushButton>
            </div>
          </div>
          <NumberRow label="Crack Spreading" value="0.0'" height="mt-[3px] h-[24px]" pad="pr-[4px]" />
          <Gradient pad="pr-[4px]" height="h-[16px]" />
          <NumberRow label="Spreading Time" value="30" height="h-[24px]" pad="pr-[4px]" />
        </Group>

        <Group title="Fragment" className="mt-[5px] pb-[2px]">
          <div className="flex h-[34px] items-center justify-between pr-[2px]">
            <span>Group</span>
            <Combo label="Group" value="Active" className="h-[20px] w-[113px]" />
          </div>
          <Check label="No Fragments" height="h-[17px]" />
          <Check label="Break Visible Edges Only" checked height="h-[20px]" />
          <div className="flex h-[24px] items-center"><Radio label="Single Faces" /></div>
          <div className="flex h-[16px] items-center"><Radio label="Smooth and Distance" checked /></div>
          <NumberRow label="Smoothing Angle" value="125.0" height="h-[22px]" width="w-[40px]" pad="pr-[2px]" indent="pl-[15px]"
            tone="bg-[#555] bg-[linear-gradient(#3399ff,#3399ff)] bg-[length:30px_12px] bg-[position:1px_0px] bg-no-repeat text-white" />
          <NumberRow label="Radius" unit="%" value="50.0" height="h-[18px]" pad="pr-[2px]" indent="pl-[15px]" />
          <div className="mt-[8px] flex h-[22px] items-center gap-[3px] pr-[2px]">
            <Radio label="Count" />
            <input aria-label="Count value" defaultValue="1" className={`${fieldBase} ml-auto w-[53px] bg-[#4e4e4e] text-[#161616]`} />
            <Spinner />
          </div>
          <NumberRow label="Randomseed" value="0" height="h-[22px]" pad="pr-[2px]" indent="pl-[15px]" />
        </Group>

        <Group title="Sorting" className="mt-[6px]">
          <div className="flex h-[38px] items-center pr-[20px]">
            <span className="mr-auto">From To</span>
            <Combo label="From To" value="Bottom-->Top" className="h-[20px] w-[95px]" />
          </div>
        </Group>

        <Group title="Initialize" className="mt-[4px]">
          <NumberRow label="Life Span" value="999" height="mt-[4px] h-[20px]" />
          <NumberRow label="Variation" unit="%" value="0.0" height="h-[18px]" />
          <NumberRow label="Speed" value="1.0" height="h-[24px]" />
          <NumberRow label="Variation" unit="%" value="0.0" height="h-[16px]" />
          <NumberRow label="M Inheriton" unit="%" value="100.0" height="h-[24px]" />
        </Group>
      </div>
      <div className="flex w-[5px] shrink-0 flex-col bg-[#c4c0c4]">
        <div className="h-[77px]" />
        <div className="flex h-[272px] items-center justify-center bg-black">
          <span className="h-[9px] w-[3px] bg-[repeating-linear-gradient(#555_0px,#555_1px,transparent_1px,transparent_2px)]" />
        </div>
      </div>
    </div>
  );
}

/* ---------- floating window ---------- */

function ThinkingWindow() {
  return (
    <section className="absolute top-[57px] right-[300px] bottom-[64px] left-[65px] flex flex-col overflow-hidden rounded-[7px] border border-[#0b1322] bg-[linear-gradient(to_bottom,#54749f_0px,#d3deed_189px,#153d7a_191px)] p-[5px] pt-0 shadow-[0_2px_16px_5px_rgba(0,0,0,0.75),inset_0_0_0_1px_#b7cbe4]">
      <header className="-mx-[4px] mt-px flex h-[26px] shrink-0 items-start rounded-t-[6px] bg-[linear-gradient(to_right,#6f8fbd_0px,#5577aa_200px,#1c4582_420px,#153d7a_820px,#1c4480_900px,#7d99c0_1010px,#8ba4c8_100%)] pl-[6px]">
        <span className="mt-[4px] flex items-center gap-[5px]">
          <svg viewBox="0 0 16 16" className="h-[16px] w-[16px]" fill="none"><rect width="16" height="16" rx="2" fill="#3e474c" /><path d="M12 4.500C9 2.500 4 4 3.500 7.500C3 11 6.500 13 9.500 12.300C12.500 11.500 12.500 8 9.500 7.600C7.500 7.500 7 9.500 8.500 10" stroke="#e6e6e6" strokeWidth="1.700" /><path d="M13 7C12 5.500 9.500 5 7.500 6" stroke="#fff" /></svg>
          <span className="-ml-px rounded-full bg-[#a9bcd9]/60 pr-2 text-[12px] leading-[16px] whitespace-pre text-black shadow-[0_0_7px_5px_rgba(169,188,217,0.6)]">
            {"Thinking001  Total=0000005  Tree=0000000  Selected=0000000"}
          </span>
        </span>
        <div className="mr-[5px] ml-auto flex h-[18px] overflow-hidden rounded-b-[4px] border border-t-0 border-[#c6d3e6]">
          <button type="button" aria-label="Minimize" className="flex w-[28px] items-center justify-center border-r border-[#c6d3e6] bg-gradient-to-b from-[#8ba1c2] via-[#5f7da6] to-[#6d8ab2]">
            <svg viewBox="0 0 12 8" className="h-[8px] w-[12px]"><rect x="0.500" y="3.500" width="11" height="4" fill="#fff" stroke="#3b4b66" /></svg>
          </button>
          <button type="button" aria-label="Maximize" className="flex w-[26px] items-center justify-center border-r border-[#c6d3e6] bg-gradient-to-b from-[#8ba1c2] via-[#5f7da6] to-[#6d8ab2]">
            <svg viewBox="0 0 12 10" className="h-[10px] w-[12px]"><path d="M0.500 0.500H11.500V9.500H0.500Z M4 3.500V6.500H8V3.500Z" fill="#fff" fillRule="evenodd" stroke="#3b4b66" /></svg>
          </button>
          <button type="button" aria-label="Close" className="flex w-[47px] items-center justify-center bg-gradient-to-b from-[#d98f80] via-[#b93322] to-[#cf5138]">
            <svg viewBox="0 0 12 10" className="h-[10px] w-[12px]"><path d="M2.500 1.500L9.500 8.500M9.500 1.500L2.500 8.500" stroke="#4a2a2a" strokeWidth="4.200" /><path d="M2.500 1.500L9.500 8.500M9.500 1.500L2.500 8.500" stroke="#fff" strokeWidth="2.600" /></svg>
          </button>
        </div>
      </header>
      <div className="flex min-h-0 flex-1 items-start overflow-hidden border border-[#a5bbd8] border-t-[#142a4a] bg-[#444] pr-[3px] pl-[9px]">
        <div className="flex pt-[9px]"><LeftColumn /></div>
        <div className="flex min-w-0 flex-1 pt-[9px] pr-[11px] pl-[15px]"><Canvas /></div>
        <div className="flex pt-[5px]"><Params /></div>
      </div>
    </section>
  );
}

/* ---------- command panel ---------- */

function CommandPanel() {
  const tab = "flex h-[25px] flex-1 items-center justify-center rounded-t-[4px] border-r border-b border-[#161616] bg-[#444]";
  return (
    <aside className="flex w-[184px] shrink-0 flex-col border-b border-[#161616] bg-[#444] px-[4px] pt-[3px] text-[#ccc]">
      <div className="-mx-[2px] flex pr-[8px]">
        <button type="button" aria-label="Create" className={tab}><svg viewBox="0 0 20 20" className="h-[20px] w-[20px]"><path d="M10 1L11.500 6L16 4L14 8.500L19 10L14 11.500L16 16L11.500 14L10 19L8.500 14L4 16L6 11.500L1 10L6 8.500L4 4L8.500 6Z" fill="#c2502c" /><circle cx="10" cy="10" r="4.300" fill="#ffb838" /><circle cx="10" cy="10" r="2" fill="#fff3c2" /></svg></button>
        <button type="button" aria-label="Modify" className={`${tab} border-b-[#444]`}><svg viewBox="0 0 20 20" className="h-[20px] w-[20px]" fill="none"><path d="M2 2H18V18H2Z" stroke="#8d949d" /><path d="M5 18C5 10 10 5 17 5" stroke="#2c82cc" strokeWidth="4.500" /><path d="M4.500 18C4.500 9 9 4 17 4" stroke="#bfe0f7" strokeWidth="1.200" /><path d="M0.500 0.500H3.500V3.500H0.500ZM16.500 16.500H19.500V19.500H16.500Z" fill="#ddd" /></svg></button>
        <button type="button" aria-label="Hierarchy" className={tab}><svg viewBox="0 0 20 20" className="h-[20px] w-[20px]" fill="none"><rect x="5.500" y="1" width="9" height="7" fill="#d5d9de" /><path d="M10 8V15M10 9L3 15M10 9L17 15" stroke="#bbb" /><path d="M1 14H6V19H1ZM8 14H13V19H8ZM15 14H20V19H15Z" fill="#d5d9de" /></svg></button>
        <button type="button" aria-label="Motion" className={tab}><svg viewBox="0 0 20 20" className="h-[20px] w-[20px]" fill="none"><path d="M2.500 4Q-0.500 10 2.500 16M5.500 4Q2.500 10 5.500 16" stroke="#888" /><circle cx="12" cy="10" r="6.500" fill="#b9bec4" stroke="#eee" strokeWidth="1.400" /><circle cx="12" cy="10" r="3.400" fill="#e6e6e6" stroke="#444" strokeWidth="1.300" /><circle cx="12" cy="10" r="1.200" fill="#444" /></svg></button>
        <button type="button" aria-label="Display" className={tab}><svg viewBox="0 0 20 20" className="h-[20px] w-[20px]" fill="none"><rect x="0.500" y="2" width="19" height="13" fill="#e8ebef" stroke="#aeb4bb" /><path d="M7 6.500L9 4.500H13.500V10L11.500 12.500H7Z" stroke="#333" strokeWidth="1.200" /><path d="M5 18H15" stroke="#c5c8cc" strokeWidth="2" /></svg></button>
        <button type="button" aria-label="Utilities" className={tab}><svg viewBox="0 0 20 20" className="h-[20px] w-[20px]" fill="none"><path d="M1 18L12 6" stroke="#8e4a3c" strokeWidth="2.800" /><path d="M8 3L12 1L18.500 7.500L19 11L16 9L14 8.500L12 7Z" fill="#b9bec4" stroke="#777" strokeWidth="0.700" /></svg></button>
      </div>
      <div className="mt-[5px] flex items-center gap-[3px] pr-[5px] pl-[4px]">
        <input aria-label="Object name" defaultValue="Thinking001" className="h-[20px] min-w-0 flex-1 border-2 border-t-[#161616] border-l-[#161616] border-r-[#333] border-b-[#333] bg-[#555] pl-[2px] outline-none" />
        <button type="button" aria-label="Object colour" className="h-[19px] w-[17px] border border-[#222] bg-[#98e29a]" />
      </div>
      <span className="relative mt-[5px] mr-[3px] ml-[4px] block h-[24px] shrink-0">
        <select aria-label="Modifier List" className="block h-full w-full appearance-none border-2 border-t-[#111] border-l-[#111] border-r-[#333] border-b-[#333] bg-[#555] pl-[2px] text-[#ddd] outline-none"><option>Modifier List</option></select>
        <span className="pointer-events-none absolute top-[2px] right-[2px] flex h-[20px] w-[17px] items-center justify-center bg-white"><svg viewBox="0 0 8 4" className="h-[4px] w-[8px]"><path d="M0 0H8L4 4Z" fill="#000" /></svg></span>
      </span>
      <ul className="mt-[4px] mr-[6px] ml-[5px] h-[119px] shrink-0 border-2 border-[#f2f2f2] bg-[#555]">
        <li className="grid h-[16px] grid-cols-[28px_1fr] items-center border-b border-[#777]">
          <svg viewBox="0 0 10 13" className="ml-[8px] h-[13px] w-[10px]"><path d="M3 8.500V12H7V8.500L9 6.500V3L7 1H3L1 3V6.500Z" fill="#fff" stroke="#000" /><path d="M4 4L6 5.500L4 7M3.500 10H6.500" stroke="#000" fill="none" /></svg>
          <span className="pr-[8px] text-center whitespace-nowrap">Wind Binding (WSM)</span>
        </li>
        <li className="h-[16px] bg-[#3f83de] pl-[21px] leading-[16px] text-[#ddd]">Thinking</li>
      </ul>
      <div className="mt-[3px] flex h-[24px] shrink-0 items-center pl-[12px]">
        <button type="button" aria-label="Pin stack" className="w-[18px]"><svg viewBox="0 0 18 12" className="h-[12px] w-[18px]" fill="none"><path d="M0 6H7" stroke="#ddd" /><path d="M7.500 2V10M9 4.500H13.500M9 7.500H13.500M14.500 1.500V10.500M16 3V9" stroke="#fff" strokeWidth="1.300" /></svg></button>
        <span className="ml-[8px] h-[16px] w-px bg-[#111]" />
        <button type="button" aria-label="Show end result" className="ml-[5px] flex h-[23px] w-[24px] items-center justify-center border border-[#161616] bg-[#3c3c3c]"><svg viewBox="0 0 8 14" className="h-[14px] w-[8px]"><path d="M0 0H8V3H6V14H2V3H0Z" fill="#fff" /></svg></button>
        <span className="ml-[6px] h-[16px] w-px bg-[#111]" />
        <button type="button" aria-label="Make unique" className="ml-[10px]"><svg viewBox="0 0 16 14" className="h-[14px] w-[16px]" fill="none"><path d="M1 1L6 7L8 12L10 7L15 1M5 7H11L8 12.500ZM3.500 4.500L5.500 3M12.500 4.500L10.500 3" stroke="#ddd" strokeWidth="1.200" /></svg></button>
        <button type="button" aria-label="Remove modifier" className="ml-[10px]"><svg viewBox="0 0 12 14" className="h-[14px] w-[12px]" fill="none"><path d="M2 5.500H10V11Q6 15 2 11ZM1 5L5 3.500L10.500 5M3 2L8 1M4.500 8V11M7.500 8V11" stroke="#ddd" strokeWidth="1.200" /></svg></button>
        <span className="ml-[11px] h-[16px] w-px bg-[#111]" />
        <button type="button" aria-label="Configure sets" className="ml-[9px]"><svg viewBox="0 0 16 15" className="h-[15px] w-[16px]"><rect x="0.500" y="0.500" width="12" height="12" fill="#fff" stroke="#ddd" /><rect width="13" height="3.500" fill="#1010c8" /><path d="M2 5.500H5M2 8H5M2 10.500H5" stroke="#666" /><path d="M9 6H12V9H9ZM13 6H16V9H13ZM6 9H9V12H6ZM9 10H12V14H9ZM13 10H16V14H13Z" fill="#ddd" stroke="#333" strokeWidth="0.700" /></svg></button>
      </div>
      <div className="mt-[11px] h-[2px] shrink-0 bg-[#111]" />
      <div className="mt-[8px] mb-[5px] flex min-h-0 flex-1 flex-col border border-t-[#161616] border-l-[#222] border-r-[#333] border-b-[#333] pt-[4px] pr-[5px] pl-[2px]">
        <div className="flex shrink-0 flex-col gap-[6px] border border-t-0 border-[#161616] px-[3px] pb-[4px]">
          <div className="mb-[2px] grid h-[17px] grid-cols-[10px_1fr_10px] items-center border border-[#666] bg-[#3f3f3f] text-center leading-[15px]"><span>-</span><span>Thinking</span></div>
          <PushButton className="h-[20px]">Properties</PushButton>
          <PushButton className="h-[20px]">About</PushButton>
          <Combo label="Preset" value="M3D_Curves" className="mx-[7px] mt-[2px] h-[21px]" />
        </div>
      </div>
    </aside>
  );
}

/* ---------- viewport, time line and status ---------- */

function Viewport() {
  return (
    <div className="relative min-h-0 flex-1 overflow-hidden border-2 border-[#7b672b] bg-[#393939]">
      <svg className="absolute inset-0 h-full w-full" fill="none">
        <path d="M15 26L70 21M15 26L31 138M16 25L70 33M57 350L62 388" stroke="#e8e8e8" />
        <path d="M61.500 0V635.500H1191.500" stroke="#b6ae12" /><path d="M1191.500 0V635" stroke="#8c8a6a" />
      </svg>
      <span className="relative ml-[4px] font-['Liberation_Sans',sans-serif] text-[11px] leading-[20px] text-[#c8c8c8]">[ + ] [ VRay</span>
    </div>
  );
}

const frames = Array.from({ length: 21 }, (_, i) => i * 10);

function TimeLine() {
  return (
    <div className="flex h-[26px] shrink-0 bg-[#444]">
      <button type="button" aria-label="Open mini curve editor" className="relative z-10 flex w-[45px] items-center justify-center">
        <svg viewBox="0 0 18 18" className="h-[18px] w-[18px]" fill="none" stroke="#bbb"><path d="M0.500 1.500H17.500V5.500H0.500ZM2 4Q5 1 8 4T15 3M0.500 14.500H17.500V17H0.500ZM4 13V7.500M2 9.500L4 7.500L6 9.500M13 7V12.500M11 10.500L13 12.500L15 10.500" /></svg>
      </button>
      <div className="-ml-[21px] flex max-w-[1208px] flex-1 bg-[linear-gradient(to_right,#444_21px,#2c2c2c_21px,#2c2c2c_1182px,#444_1182px)]">
        {frames.map((f) => (
          <span key={f} className={`flex min-w-0 flex-1 flex-col items-center text-[#aaa] ${f === 0 ? "text-[#d8cf3a]" : ""}`}>
            <svg viewBox="0 0 50 12" preserveAspectRatio="none" className="h-[13px] w-full shrink-0" stroke="#606060">
              <path d={f === 0 ? "M25 0V12M35 4V12M45 4V12" : f === 200 ? "M5 4V12M15 4V12M25 0V12" : "M5 4V12M15 4V12M25 0V12M35 4V12M45 4V12"} vectorEffect="non-scaling-stroke" />
            </svg>
            <span className={`leading-[13px] ${f === 0 ? "-mt-[13px] h-[26px] bg-[#7d7411] px-px pt-[13px]" : ""}`}>{f}</span>
          </span>
        ))}
      </div>
    </div>
  );
}

function Coord({ axis, value }: { axis: string; value: string }) {
  const id = useId();
  return (
    <span className="flex shrink-0 items-center gap-[2px]">
      <label htmlFor={id} className="w-[10px]">{axis}:</label>
      <input id={id} defaultValue={value} className="h-[20px] w-[56px] border-2 border-t-[#141414] border-l-[#141414] border-r-[#444] border-b-[#444] bg-[#595959] pl-px text-[#ddd] outline-none" />
      <Spinner />
    </span>
  );
}

function Glyph({ label, path, children, className = "w-[24px]" }: { label: string; path?: string; children?: ReactNode; className?: string }) {
  return (
    <button type="button" aria-label={label} className={`flex h-[20px] shrink-0 items-center justify-center ${className}`}>
      <svg viewBox="0 0 18 16" className="h-[16px] w-[18px]" fill="none">
        {path && <path d={path} fill="#444" stroke="#ddd" strokeWidth="1.300" />}
        {children}
      </svg>
    </button>
  );
}

function StatusBar() {
  return (
    <footer className="flex h-[44px] shrink-0 overflow-hidden bg-[#444] pt-[4px] text-[#ccc]">
      <div className="flex w-[104px] shrink-0 border-r-2 border-[#111] pr-[3px]">
        <div className="h-[24px] flex-1 border border-[#777] border-r-white bg-[#dcc3c6]" />
      </div>
      <div className="ml-[3px] flex min-w-0 flex-1 flex-col gap-[3px]">
        <div className="flex h-[21px] items-center">
          <span className="h-[21px] min-w-0 flex-1 border border-t-[#141414] border-l-[#141414] border-r-[#333] border-b-[#333] pl-[5px] leading-[20px]">1 Object Selected</span>
          <button type="button" aria-label="Lock selection" className="ml-[8px]"><svg viewBox="0 0 12 14" className="h-[14px] w-[11px]" fill="none"><path d="M3 7V3.500Q6 -0.500 9 3.500V7" stroke="#ddd" strokeWidth="1.400" /><rect x="1" y="6.500" width="10" height="7" fill="#e8d3a4" /><path d="M6 8V12" stroke="#444" strokeWidth="1.500" /></svg></button>
          <button type="button" aria-label="Transform type-in" className="mr-[9px] ml-[15px]"><svg viewBox="0 0 14 14" className="h-[14px] w-[14px]" fill="none"><rect width="14" height="14" fill="#eee" /><circle cx="7" cy="7" r="3" stroke="#333" strokeWidth="1.300" /><path d="M7 0V4M7 10V14M0 7H4M10 7H14" stroke="#333" strokeWidth="1.300" /></svg></button>
        </div>
        <div className="flex h-[20px] items-center border-t-2 border-[#141414]"><span className="pl-[54px] leading-[18px] whitespace-nowrap">drag to select and move objects</span></div>
      </div>
      <div className="flex shrink-0 flex-col gap-[3px]">
        <div className="flex h-[21px] items-center">
          <Coord axis="X" value="-32.826'" /><Coord axis="Y" value="-43.931'" /><Coord axis="Z" value="0.0'" />
        </div>
        <div className="flex h-[20px] items-center justify-end border-t-2 border-[#141414] pr-[5px]"><svg viewBox="0 0 12 13" className="h-[13px] w-[12px]"><path d="M0.500 3L3 0.500H11.500V10L9 12.500H0.500Z" fill="#f2f2f2" stroke="#111" /><path d="M0.500 3H9V12.500M9 3L11.500 0.500" stroke="#111" fill="none" /></svg></div>
      </div>
      <div className="ml-[2px] flex w-[99px] shrink-0 flex-col gap-[4px]">
        <span className="h-[21px] border border-t-[#141414] border-l-[#141414] border-r-[#333] border-b-[#333] pl-[4px] leading-[20px]">Grid = 50.0'</span>
        <button type="button" className="h-[20px] border border-t-[#141414] border-l-[#141414] border-r-[#333] border-b-[#333] pl-[4px] text-left leading-[20px]">Add Time Tag</button>
      </div>
      <button type="button" aria-label="Set keys" className="ml-[4px] flex h-[40px] w-[43px] shrink-0 items-center justify-center border border-[#222]">
        <svg viewBox="0 0 26 12" className="h-[12px] w-[26px]" fill="none" stroke="#0a0a0a" strokeWidth="1.800"><circle cx="5" cy="6" r="3.600" /><path d="M8.500 6H25V10M20.500 6V10" /></svg>
      </button>
      <div className="ml-[2px] flex w-[48px] shrink-0 flex-col">
        <PushButton className="h-[22px] whitespace-nowrap">Auto Key</PushButton>
        <PushButton className="h-[22px] whitespace-nowrap">Set Key</PushButton>
      </div>
      <div className="ml-[2px] flex w-[115px] shrink-0 flex-col gap-[2px]">
        <Combo label="Key selection" value="Selected" className="h-[21px]" />
        <div className="flex">
          <Glyph label="Tangent type" className="w-[25px]"><path d="M2 15C6 15 7 2 10 2S12 13 16 9" stroke="#d4625c" strokeWidth="1.500" /><path d="M8 0L12 3M12 0L8 3" stroke="#7f7fd0" /></Glyph>
          <PushButton className="h-[20px] flex-1">Key Filters...</PushButton>
        </div>
      </div>
      <div className="ml-[6px] flex w-[223px] shrink-0 flex-col gap-[2px]">
        <div className="flex h-[20px]">
          <Glyph label="Go to start" path="M1.500 3V13M4 3V13M10 3V13L5 8ZM16.500 3V13L11 8Z" />
          <Glyph label="Previous frame" path="M8 3V13L1.500 8ZM10.500 3H12V13H10.500ZM14.500 3H16V13H14.500Z" />
          <Glyph label="Play" path="M5 2.500V13.500L12 8Z"><path d="M18 12V16H14Z" fill="#fff" /></Glyph>
          <Glyph label="Next frame" path="M10 3V13L16.500 8ZM2 3H3.500V13H2ZM6 3H7.500V13H6Z" />
          <Glyph label="Go to end" className="w-[28px]" path="M16.500 3V13M14 3V13M8 3V13L13 8ZM1.500 3V13L7 8Z" />
          <Glyph label="Dolly" className="w-[28px]"><path d="M2 8H16M9 1V12" stroke="#ddd" strokeWidth="1.300" /><path d="M6 4L9 0L12 4ZM6 11H12L9 15Z" fill="#c96a64" stroke="#eee" strokeWidth="0.800" /><path d="M18 12V16H14Z" fill="#fff" /></Glyph>
          <Glyph label="Perspective" className="w-[22px]"><path d="M2 4L9 1L16 4L9 15Z" fill="#7f8fd8" stroke="#e8e8ff" /><path d="M2 4L9 7L16 4M9 7V15" stroke="#222a6a" /></Glyph>
          <Glyph label="Roll" className="w-[22px]"><path d="M6 13C1 9 3 3 9 3S17 9 12 13M3 14H7V10M15 14H11V10" stroke="#bbb" strokeWidth="1.500" /><path d="M9 0V5" stroke="#d33" strokeWidth="1.500" /></Glyph>
          <Glyph label="Zoom extents all" className="w-[26px]"><path d="M6 1H11V6H6ZM12 1H17V6H12ZM12 7H17V12H12Z" fill="#d8dde2" /><path d="M3 8L5 6H11V13L9 15H3Z" fill="#6f9a5c" stroke="#dfe8d8" strokeWidth="0.800" /><path d="M18 12V16H14Z" fill="#fff" /></Glyph>
        </div>
        <div className="flex h-[20px] items-center">
          <Glyph label="Key mode" path="M1.500 3V13M16.500 3V13M8 4V12L4 8ZM10 4V12L14 8Z" />
          <input aria-label="Current frame" defaultValue="0" className="ml-[3px] h-[20px] w-[62px] border-2 border-t-[#141414] border-l-[#141414] border-r-[#444] border-b-[#444] bg-[#595959] pl-[2px] text-[#ddd] outline-none" />
          <span className="ml-[2px] flex"><Spinner /></span>
          <Glyph label="Time configuration" className="w-[24px]"><Dialog x={1} y={1} /><circle cx="13" cy="11" r="4" fill="#eee" stroke="#444" /><path d="M13 9V11H15" stroke="#222" /></Glyph>
          <Glyph label="Field of view" path="M3 1L16 8L3 15M6 3Q10 8 6 13" className="w-[24px]" />
          <Glyph label="Walk through" className="w-[20px]"><path d="M4 2Q8 1 8 6L7 10H4Q2 5 4 2ZM4 11H7V14H4ZM12 1Q16 1 15.500 6L14.500 9H11.500Q10 4 12 1ZM11.500 10.500H14.500V13H11.500Z" fill="#f2f2f2" /></Glyph>
          <Glyph label="Orbit" className="w-[24px]"><circle cx="9" cy="8" r="5" fill="#dfe3f4" stroke="#3a4fa8" strokeWidth="1.300" /><path d="M1 8Q9 13 17 8M1 8Q9 4 17 8" stroke="#d04a42" strokeWidth="1.400" /></Glyph>
          <Glyph label="Maximize viewport" className="w-[22px]"><rect x="2" y="1" width="14" height="14" fill="#f0f0f0" stroke="#333" /><path d="M5 4L12 11M5 8V4H9" stroke="#111" strokeWidth="1.500" /></Glyph>
        </div>
      </div>
    </footer>
  );
}

function MiniWindow() {
  const b = "flex h-[18px] items-center justify-center border-r border-[#dce5f1]";
  return (
    <div className="absolute bottom-0 left-0 flex h-[21px] w-[159px] items-start overflow-hidden rounded-t-[7px] border border-b-0 border-[#10161f] bg-gradient-to-b from-[#a9bcd8] to-[#dbe6f4] pl-[9px] text-[12px] text-black shadow-[0_0_6px_2px_rgba(0,0,0,0.5),inset_0_1px_0_#fff]">
      <svg viewBox="0 0 14 12" className="mt-[6px] h-[12px] w-[14px]"><rect x="0.500" y="0.500" width="13" height="11" fill="#f6f6f6" stroke="#889" /><path d="M1 3H6V11H1Z" fill="#3c8f74" /><path d="M8 4H12M8 6H12M8 8H12" stroke="#89b" /></svg>
      <span className="mt-[4px] ml-[7px] leading-[16px]">V...</span>
      <div className="mr-[7px] ml-auto flex overflow-hidden rounded-b-[4px] border border-t-0 border-[#dce5f1] bg-[#8fa6c8]">
        <button type="button" aria-label="Restore" className={`${b} w-[27px]`}><svg viewBox="0 0 12 11" className="h-[11px] w-[12px]" fill="#fff" stroke="#3b4b66"><path d="M3.500 0.500H11.500V8.500H3.500Z" /><path d="M0.500 2.500H8.500V10.500H0.500ZM3.500 5V8H5.500V5Z" fillRule="evenodd" /></svg></button>
        <button type="button" aria-label="Maximize" className={`${b} w-[27px]`}><svg viewBox="0 0 12 10" className="h-[10px] w-[12px]"><path d="M0.500 0.500H11.500V9.500H0.500ZM4 3.500V6.500H8V3.500Z" fill="#fff" fillRule="evenodd" stroke="#3b4b66" /></svg></button>
        <button type="button" aria-label="Close" className="flex h-[18px] w-[46px] items-center justify-center bg-[#56657f]"><svg viewBox="0 0 12 10" className="h-[10px] w-[12px]"><path d="M2.500 1.500L9.500 8.500M9.500 1.500L2.500 8.500" stroke="#fff" strokeWidth="2.400" /></svg></button>
      </div>
    </div>
  );
}

export default function App() {
  return (
    <div className="relative flex h-screen flex-col overflow-hidden bg-[#444] font-['Roboto','Liberation_Sans',sans-serif] text-[11px] leading-[14px]">
      <MainToolbar />
      <Ribbon />
      <div className="flex min-h-0 flex-1">
        <div className="flex min-w-0 flex-1 flex-col">
          <Viewport />
          <div className="flex h-[20px] shrink-0 items-center border-b-2 border-[#161616] text-[#aaa]">
            <button type="button" className="h-[17px] w-[16px] border-r-2 border-b border-[#161616] text-[12px]">&lt;</button>
            <div className="h-[17px] flex-1 border-b border-[#161616] pl-[43px] leading-[17px]">0</div>
          </div>
          <TimeLine />
        </div>
        <CommandPanel />
      </div>
      <StatusBar />
      <ThinkingWindow />
      <MiniWindow />
    </div>
  );
}
